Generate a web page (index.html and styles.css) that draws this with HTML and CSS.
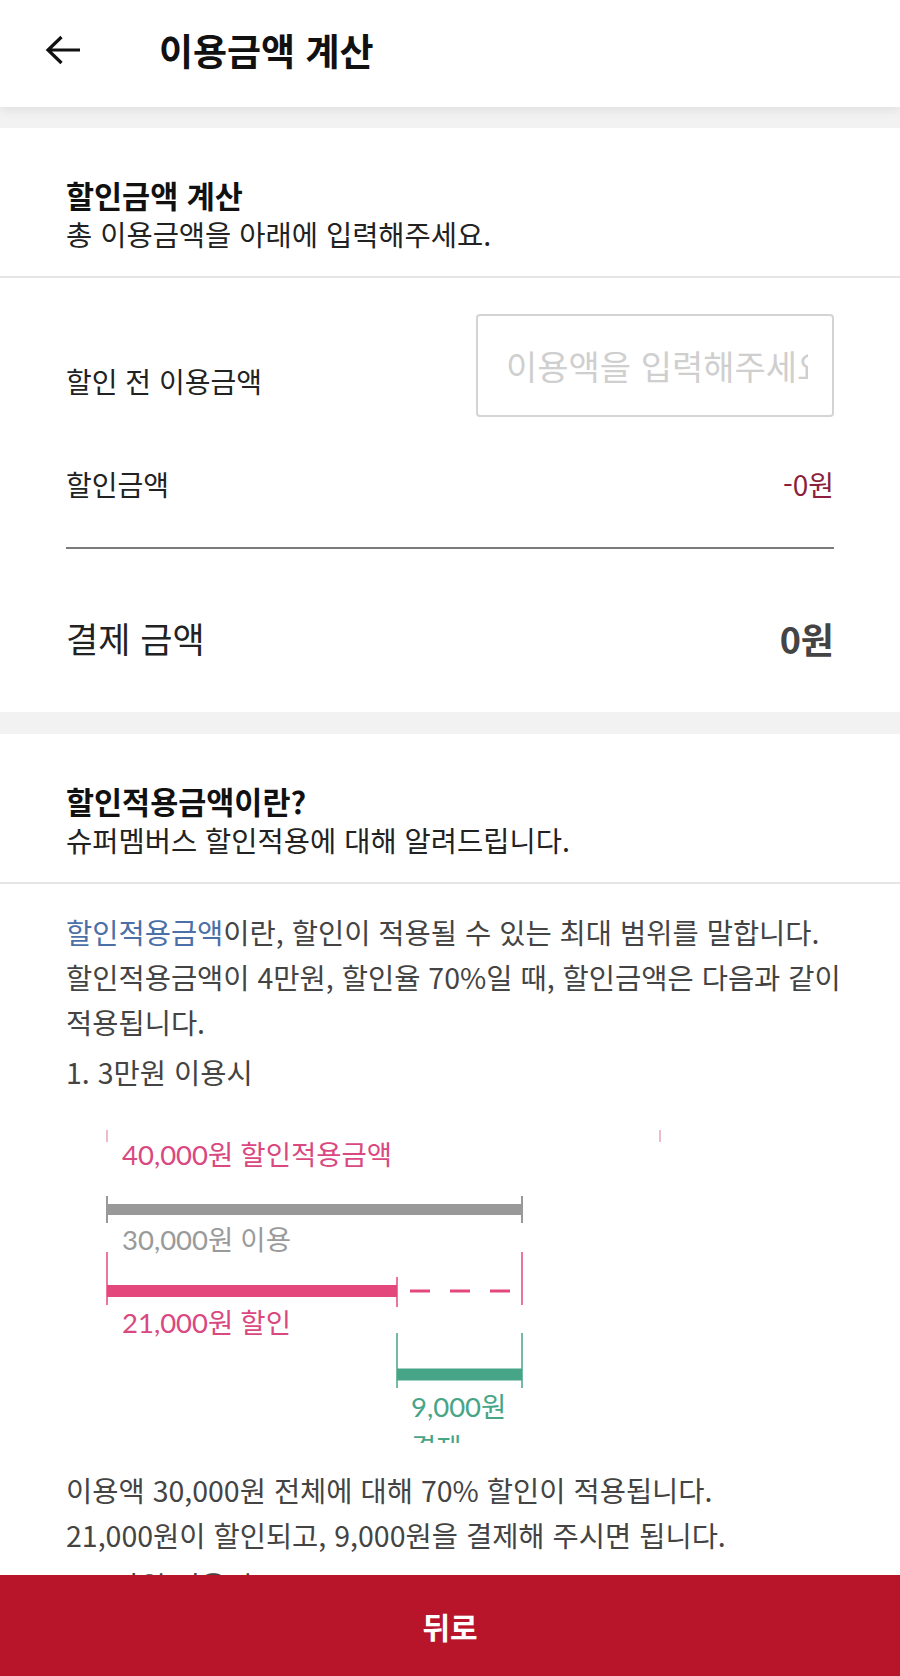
FILE: index.html
```html
<!DOCTYPE html>
<html lang="ko">
<head>
<meta charset="utf-8">
<title>이용금액 계산</title>
<link rel="stylesheet" href="styles.css">
</head>
<body>
<div class="topbar">
  <svg class="back" width="36" height="30" viewBox="0 0 36 30"><path d="M35 15H3M16.5 2L3 15l13.5 13" fill="none" stroke="#111" stroke-width="3.2"/></svg>
  <h1 class="title">이용금액 계산</h1>
</div>

<div class="card">
  <div class="card-head">
    <h2>할인금액 계산</h2>
    <p>총 이용금액을 아래에 입력해주세요.</p>
  </div>
  <div class="calc">
    <div class="row row-input">
      <label class="label" for="amount">할인 전 이용금액</label>
      <input id="amount" class="amount" type="text" placeholder="이용액을 입력해주세요">
    </div>
    <div class="row row-discount">
      <span class="label">할인금액</span>
      <span class="discount">-0원</span>
    </div>
    <div class="rule"></div>
    <div class="row row-total">
      <span class="total-label">결제 금액</span>
      <span class="total">0원</span>
    </div>
  </div>
</div>

<div class="card card-info">
  <div class="card-head">
    <h2>할인적용금액이란?</h2>
    <p>슈퍼멤버스 할인적용에 대해 알려드립니다.</p>
  </div>
  <div class="info">
    <p><span class="hl">할인적용금액</span>이란, 할인이 적용될 수 있는 최대 범위를 말합니다.<br>할인적용금액이 4만원, 할인율 70%일 때, 할인금액은 다음과 같이<br>적용됩니다.</p>
    <p class="step">1. 3만원 이용시</p>
    <svg class="diagram" width="768" height="343" viewBox="0 0 768 343">
      <g stroke="#e9a3bc" stroke-width="1.5">
        <line x1="41" y1="30" x2="41" y2="42"/>
        <line x1="594" y1="30" x2="594" y2="42"/>
      </g>
      <text class="d-txt d-pink" x="56" y="65">40,000원 할인적용금액</text>

      <g stroke="#999">
        <line x1="41" y1="109.5" x2="456" y2="109.5" stroke-width="11"/>
        <line x1="41" y1="96" x2="41" y2="123" stroke-width="2"/>
        <line x1="456" y1="96" x2="456" y2="123" stroke-width="2"/>
      </g>
      <text class="d-txt d-gray" x="56" y="150">30,000원 이용</text>

      <g stroke="#e4477c">
        <line x1="41" y1="152" x2="41" y2="205" stroke-width="1.5"/>
        <line x1="456" y1="152" x2="456" y2="205" stroke-width="1.5"/>
        <line x1="331" y1="177" x2="331" y2="207" stroke-width="1.5"/>
        <line x1="41" y1="191" x2="331" y2="191" stroke-width="12"/>
        <line x1="344" y1="191" x2="456" y2="191" stroke-width="3" stroke-dasharray="20 20"/>
      </g>
      <text class="d-txt d-pink" x="56" y="233">21,000원 할인</text>

      <g stroke="#45a586">
        <line x1="331" y1="233" x2="331" y2="288" stroke-width="1.5"/>
        <line x1="456" y1="233" x2="456" y2="288" stroke-width="1.5"/>
        <line x1="331" y1="274.5" x2="456" y2="274.5" stroke-width="12"/>
      </g>
      <text class="d-txt d-green" x="345" y="317">9,000원</text>
      <text class="d-txt d-green" x="345" y="358">결제</text>
    </svg>
    <p class="after">이용액 30,000원 전체에 대해 70% 할인이 적용됩니다.<br>21,000원이 할인되고, 9,000원을 결제해 주시면 됩니다.</p>
    <p class="step">2. 5만원 이용시</p>
  </div>
</div>

<button class="btn-back" type="button">뒤로</button>
</body>
</html>
```

FILE: styles.css
```css
body {margin:0; background:#f2f2f2; font-family:"Noto Sans CJK KR","Noto Sans",sans-serif; color:#222;}

.topbar {
height:107px;
box-sizing:border-box;
padding:0 0 7px 45px;
display:flex;
align-items:center;
background:#fff;
box-shadow:0 3px 10px rgba(0,0,0,.08);
position:relative;
z-index:1;
}
.topbar .back {display:block; flex:none;}
.topbar .title {margin:0 0 0 78px; font-size:37px; line-height:46px; font-weight:700; color:#111;}

.card {background:#fff; margin-top:21px;}
.card-info {margin-top:22px;}
.card-head {padding:48px 66px 22px; border-bottom:2px solid #e5e5e5;}
.card-head h2 {margin:0; font-size:30.5px; line-height:38px; font-weight:700; color:#111;}
.card-head p {margin:0; font-size:28.5px; line-height:40px; color:#222;}

.calc {padding:36px 66px 52px;}
.row {display:flex; justify-content:space-between; align-items:center;}
.label {font-size:28px; line-height:36px; color:#222;}
.row-input .label {padding-top:30px;}
.amount {
width:358px;
height:103px;
box-sizing:border-box;
margin:0;
padding:0 24px 0 28px;
border:2px solid #d4d4d4;
border-radius:4px;
font-family:"Noto Sans CJK KR",sans-serif;
font-size:34px;
color:#222;
background:#fff;
outline:none;
}
.amount::placeholder {color:#cfcfcf;}
.row-discount {margin-top:49px;}
.discount {font-size:28px; line-height:36px; color:#8c1f3c;}
.rule {height:2px; background:#7b7b7b; margin-top:45px;}
.row-total {margin-top:67px;}
.total-label {font-size:35px; line-height:44px; color:#222;}
.total {font-size:36px; line-height:44px; font-weight:700; color:#444;}

.info {padding:25px 66px 140px;}
.info p {margin:0; font-size:28.5px; line-height:45px; color:#444; white-space:nowrap;}
.info .step {margin-top:5px;}
.info .after {margin-top:24px;}
.hl {color:#4b70a8;}

.diagram {display:block; margin-top:6px; overflow:hidden;}
.d-txt {font-family:Lato,"Noto Sans CJK KR",sans-serif; font-size:27.5px;}
.d-pink {fill:#d9497f;}
.d-gray {fill:#9a9a9a;}
.d-green {fill:#47a587;}

.btn-back {
position:fixed;
left:0;
right:0;
bottom:0;
width:100%;
height:101px;
margin:0;
padding:0;
border:0;
background:#b8152a;
color:#fff;
font-family:"Noto Sans CJK KR",sans-serif;
font-size:30px;
font-weight:700;
}
```
